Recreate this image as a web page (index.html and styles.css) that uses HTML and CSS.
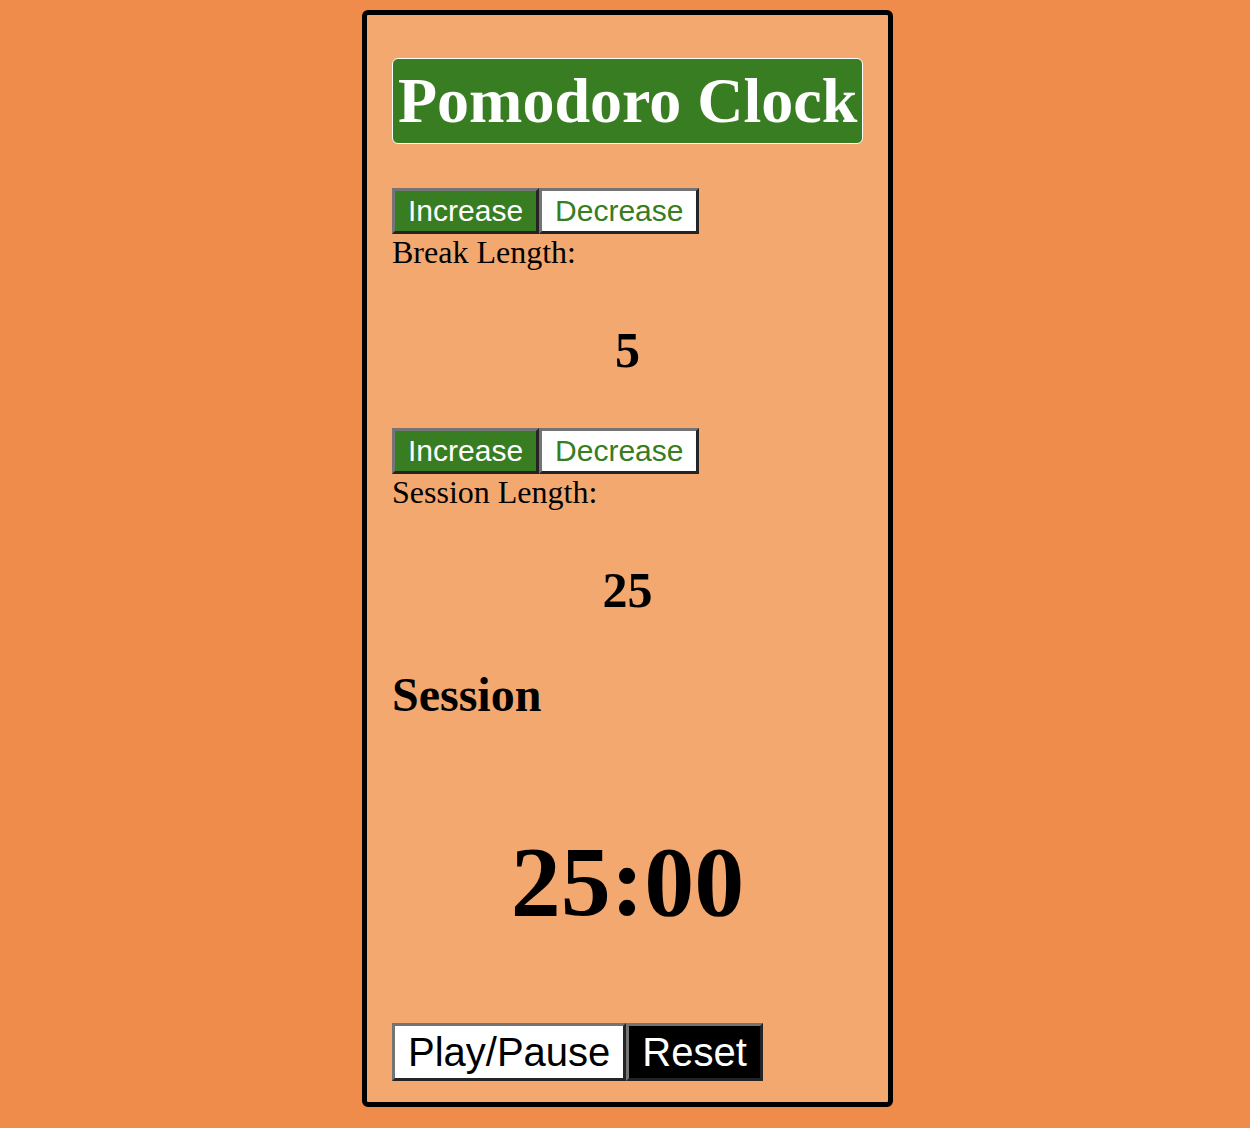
FILE: index.html
```html
<!DOCTYPE html>
<html lang="en">
<head>
<meta charset="utf-8">
<title>Pomodoro Clock</title>
<link rel="stylesheet" href="styles.css">
</head>
<body>
<main class="clock">
  <h1 class="title">Pomodoro Clock</h1>
  <div class="controls">
    <button class="btn btn-green">Increase</button><button class="btn btn-white">Decrease</button>
  </div>
  <div class="label">Break Length:</div>
  <div class="value">5</div>
  <div class="controls controls-2">
    <button class="btn btn-green">Increase</button><button class="btn btn-white">Decrease</button>
  </div>
  <div class="label">Session Length:</div>
  <div class="value">25</div>
  <h2 class="mode">Session</h2>
  <div class="time">25:00</div>
  <div class="actions">
    <button class="btn btn-big btn-play">Play/Pause</button><button class="btn btn-big btn-reset">Reset</button>
  </div>
</main>
</body>
</html>
```

FILE: styles.css
```css
html, body {
  margin: 0;
  padding: 0;
}
body {
  background: #ef8b4b;
  font-family: "Liberation Serif", "Times New Roman", serif;
  color: #000;
  padding-top: 10px;
  padding-left: 5px;
}
.clock {
  width: 471px;
  margin: 0 auto;
  background: #f3a870;
  border: 5px solid #000;
  border-radius: 6px;
  padding: 25px 25px 21px;
}
.title {
  display: inline-block;
  white-space: nowrap;
  margin: 18px 0 0;
  padding: 4px 5px;
  background: #387d22;
  color: #fff;
  border: 1px solid #fff;
  border-radius: 6px;
  font-size: 64px;
  line-height: 76px;
  font-weight: bold;
}
.controls {
  display: flex;
  margin-top: 44px;
}
.controls-2 {
  margin-top: 49px;
}
.btn {
  font-family: "Liberation Sans", Arial, sans-serif;
  font-size: 30px;
  line-height: 34px;
  padding: 3px 13px;
  border-width: 3px;
  border-style: solid;
  border-color: #747474 #242424 #242424 #747474;
  margin: 0;
  cursor: pointer;
}
.btn-green {
  background: #387d22;
  color: #fff;
}
.btn-white {
  background: #fff;
  color: #387d22;
}
.label {
  font-size: 32px;
  line-height: 36px;
}
.value {
  margin-top: 51px;
  text-align: center;
  font-weight: bold;
  font-size: 50px;
  line-height: 58px;
}
.mode {
  margin: 48px 0 0;
  font-size: 48px;
  line-height: 56px;
  font-weight: bold;
}
.time {
  margin-top: 101px;
  text-align: center;
  font-weight: bold;
  font-size: 100px;
  line-height: 115px;
}
.actions {
  display: flex;
  margin-top: 84px;
}
.btn-big {
  font-size: 40px;
  line-height: 46px;
  padding: 3px 13px;
}
.btn-play {
  background: #fff;
  color: #000;
}
.btn-reset {
  background: #000;
  color: #fff;
}
```
